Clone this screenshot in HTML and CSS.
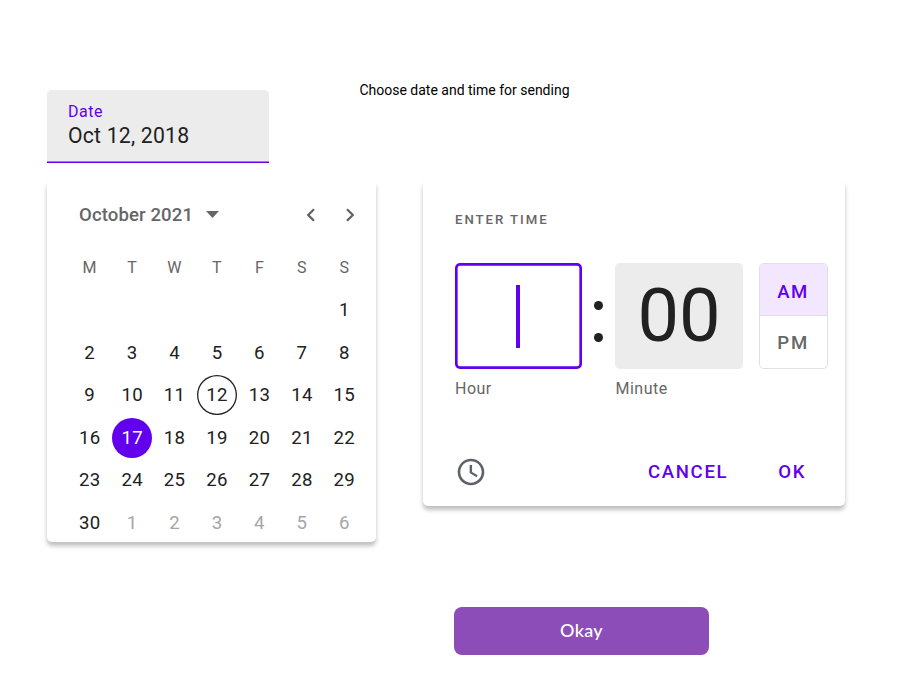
FILE: index.html
```html
<!DOCTYPE html>
<html lang="en">
<head>
<meta charset="utf-8">
<title>Choose date and time</title>
<link rel="stylesheet" href="styles.css">
</head>
<body>
<header class="top">
  <div class="field"><span class="field-label">Date</span><span class="field-value">Oct 12, 2018</span></div>
  <h1 class="title">Choose date and time for sending</h1>
</header>
<main class="pickers">
  <section class="card calendar">
    <div class="month-bar">
      <span class="month">October 2021</span>
      <svg class="caret" width="13" height="7" viewBox="0 0 13 7"><path d="M0 0h13L6.5 7z" fill="#666"/></svg>
      <svg class="prev" width="10" height="14" viewBox="0 0 10 14"><path d="M8 1.2 2.2 7 8 12.8" fill="none" stroke="#606060" stroke-width="2.2"/></svg>
      <svg class="next" width="10" height="14" viewBox="0 0 10 14"><path d="M2 1.2 7.8 7 2 12.8" fill="none" stroke="#606060" stroke-width="2.2"/></svg>
    </div>
    <div class="days">
      <span class="wd">M</span><span class="wd">T</span><span class="wd">W</span><span class="wd">T</span><span class="wd">F</span><span class="wd">S</span><span class="wd">S</span>
      <span class="first">1</span>
      <span>2</span><span>3</span><span>4</span><span>5</span><span>6</span><span>7</span><span>8</span>
      <span>9</span><span>10</span><span>11</span><span><b class="today">12</b></span><span>13</span><span>14</span><span>15</span>
      <span>16</span><span><b class="selected">17</b></span><span>18</span><span>19</span><span>20</span><span>21</span><span>22</span>
      <span>23</span><span>24</span><span>25</span><span>26</span><span>27</span><span>28</span><span>29</span>
      <span>30</span><span class="out">1</span><span class="out">2</span><span class="out">3</span><span class="out">4</span><span class="out">5</span><span class="out">6</span>
    </div>
  </section>
  <section class="card time">
    <h2 class="time-title">ENTER TIME</h2>
    <div class="clock">
      <div class="unit"><div class="box active"><i class="cursor"></i></div><span class="unit-label">Hour</span></div>
      <div class="colon"><i></i><i></i></div>
      <div class="unit"><div class="box"><span class="digits">00</span></div><span class="unit-label">Minute</span></div>
      <div class="period"><div class="am">AM</div><div class="pm">PM</div></div>
    </div>
    <div class="actions">
      <svg width="32" height="32" viewBox="0 0 24 24" fill="#5f6368"><path d="M11.99 2C6.47 2 2 6.48 2 12s4.47 10 9.99 10C17.52 22 22 17.52 22 12S17.52 2 11.99 2zM12 20c-4.42 0-8-3.58-8-8s3.58-8 8-8 8 3.58 8 8-3.58 8-8 8z"/><path d="M12.8 6.8H11v6l5.2 3.1.8-1.4-4.2-2.5z"/></svg>
      <span class="action cancel">CANCEL</span>
      <span class="action">OK</span>
    </div>
  </section>
</main>
<button class="okay">Okay</button>
</body>
</html>
```
FILE: styles.css
```css
* { box-sizing: border-box; }
body {
  margin: 0;
  height: 700px;
  padding: 90px 0 0 47px;
  background: #fff;
  color: #212121;
  font-family: Roboto, sans-serif;
  overflow: hidden;
}
i, b { font-style: normal; font-weight: 400; }
.top { display: flex; align-items: flex-start; }
.field {
  display: flex;
  flex-direction: column;
  width: 222.4px;
  height: 73px;
  padding: 12px 21px 0;
  background: #ececec;
  border-radius: 5px 5px 0 0;
  box-shadow: inset 0 -1.6px #6200ee;
}
.field-label { font-size: 16px; line-height: 19px; letter-spacing: .55px; color: #6200ee; }
.field-value { font-size: 21.2px; line-height: 30px; letter-spacing: .22px; }
.title { margin: -10px 0 0 90px; font-size: 14px; line-height: 20px; font-weight: 400; color: #000; }
.pickers { display: flex; align-items: flex-start; gap: 47px; margin-top: 17px; }
.card {
  background: #fff;
  border-radius: 5px;
  box-shadow: 0 4px 4px rgba(0, 0, 0, .25);
}
.calendar { width: 329px; height: 362.4px; padding: 23.5px 10px 0 21px; }
.month-bar { display: flex; align-items: center; height: 22px; padding: 0 0 0 11px; }
.month { font-size: 18.6px; font-weight: 500; letter-spacing: .1px; line-height: 20px; color: #666; }
.caret { margin-left: 13px; }
.prev { margin-left: auto; }
.next { margin: 0 10.7px 0 29.3px; }
.days {
  display: grid;
  grid-template-columns: repeat(7, 42.45px);
  grid-auto-rows: 42.45px;
  margin: 21.3px 0 0 .5px;
  font-size: 18.6px;
  line-height: 22px;
  letter-spacing: .3px;
}
.days span { display: flex; align-items: center; justify-content: center; }
.days .wd { font-size: 16px; color: #666; }
.days .first { grid-column: 7; }
.days .out { color: #a6a6a6; }
.today, .selected {
  display: flex;
  align-items: center;
  justify-content: center;
  width: 39.8px;
  height: 39.8px;
  flex: none;
  border-radius: 50%;
}
.today { box-shadow: inset 0 0 0 1.3px #212121; }
.selected { background: #6200ee; color: #fff; }
.time { width: 422px; height: 326px; padding: 32px 17px 0 32px; }
.time-title { margin: 0; font-size: 13.2px; line-height: 16px; font-weight: 500; letter-spacing: 1.95px; color: #666; }
.clock { display: flex; margin-top: 35px; }
.unit { width: 127.3px; }
.box {
  display: flex;
  align-items: center;
  justify-content: center;
  height: 106px;
  border-radius: 5px;
  background: #ececec;
}
.box.active { background: #fff; box-shadow: inset 0 0 0 2.65px #6200ee; }
.cursor { width: 3.8px; height: 63px; margin-right: 1px; background: #6200ee; }
.digits { font-size: 74px; line-height: 106px; }
.unit-label { display: block; margin-top: 10px; font-size: 16px; line-height: 20px; letter-spacing: .5px; color: #666; }
.colon { display: flex; flex-direction: column; gap: 23px; width: 33.2px; padding: 37.7px 0 0 12.2px; }
.colon i { width: 9px; height: 9px; border-radius: 50%; background: #212121; }
.period {
  width: 69px;
  height: 106px;
  margin-left: 15.8px;
  border: 1.3px solid #dedee4;
  border-radius: 5px;
  overflow: hidden;
  font-size: 18.6px;
  font-weight: 500;
  letter-spacing: 1.65px;
  text-align: center;
}
.am { height: 52px; line-height: 56px; background: #f2e7fe; color: #6200ee; border-bottom: 1.3px solid #dedee4; }
.pm { line-height: 54px; color: #666; }
.actions { display: flex; align-items: center; height: 34px; margin-top: 56px; }
.action { font-size: 18.6px; font-weight: 500; letter-spacing: 1.65px; color: #6200ee; }
.cancel { margin: 0 50px 0 161px; }
.okay {
  display: block;
  width: 255px;
  height: 48px;
  margin: 64.6px 0 0 407px;
  padding: 0 0 2px;
  border: 0;
  border-radius: 8px;
  background: #8c4db9;
  color: #fff;
  font: 500 18px/46px Lato, sans-serif;
  letter-spacing: .3px;
}
```
